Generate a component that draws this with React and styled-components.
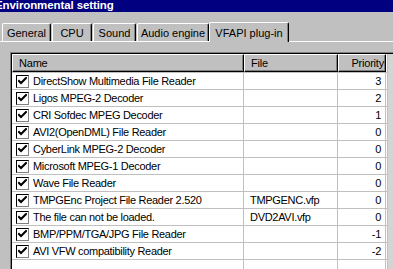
import React from "react";
import styled, { createGlobalStyle } from "styled-components";

const Global = createGlobalStyle`
  html, body { margin: 0; padding: 0; background: #c0c0c0; overflow: hidden; }
  * { box-sizing: border-box; }
`;

const FONT = `"Liberation Sans", Arial, sans-serif`;

const Window = styled.div`
  width: 393px;
  height: 269px;
  overflow: hidden;
  background: #c0c0c0;
  font-family: ${FONT};
  font-size: 11px;
  color: #000;
`;

const TitleBar = styled.div`
  height: 12px;
  background: #000080;
  color: #fff;
  font-weight: bold;
  font-size: 11.5px;
  line-height: 10px;
  white-space: nowrap;
  overflow: hidden;
`;

const TitleText = styled.span`
  display: inline-block;
  margin-left: -5px;
  letter-spacing: -0.1px;
`;

const TabStrip = styled.div`
  display: flex;
  align-items: flex-end;
  height: 20px;
  margin-top: 9px;
  padding-left: 2px;
`;

const Tab = styled.div`
  position: relative;
  width: ${(p) => p.$w}px;
  height: ${(p) => (p.$active ? 20 : 18)}px;
  padding-top: ${(p) => (p.$active ? 4 : 3)}px;
  margin: ${(p) => (p.$active ? "0 0 -1px -1px" : "0 1px 0 0")};
  border-top: 1px solid #fff;
  border-left: 1px solid #fff;
  border-right: 1px solid #000;
  box-shadow: inset -1px 0 0 #808080;
  border-radius: 2px 2px 0 0;
  background: #c0c0c0;
  white-space: nowrap;
  text-align: center;
  line-height: 13px;
  z-index: ${(p) => (p.$active ? 1 : 0)};
`;

const Panel = styled.div`
  border-top: 1px solid #fff;
  padding: 10px 0 0 10px;
`;

const ListBox = styled.div`
  display: flex;
  border-top: 1px solid #808080;
  border-left: 1px solid #808080;
  box-shadow: inset 1px 1px 0 #000;
  padding: 1px 0 0 1px;
  width: 400px;
  height: 240px;
  background: #fff;
`;

const Table = styled.div`
  width: 375px;
  flex: none;
  display: flex;
  flex-direction: column;
`;

const COLS = "232px 94px 48px";

const HeaderRow = styled.div`
  display: grid;
  grid-template-columns: ${COLS};
  height: 18px;
`;

const HeaderCell = styled.div`
  background: #c0c0c0;
  border-top: 1px solid #fff;
  border-left: 1px solid #fff;
  border-right: 1px solid #000;
  border-bottom: 1px solid #000;
  box-shadow: inset -1px -1px 0 #808080;
  padding: 1px ${(p) => (p.$right ? "1px" : "6px")} 0 6px;
  text-align: ${(p) => (p.$right ? "right" : "left")};
  line-height: 14px;
  white-space: nowrap;
  letter-spacing: -0.2px;
`;

const Row = styled.div`
  display: grid;
  grid-template-columns: ${COLS};
  height: 17px;
  border-top: 1px solid #c0c0c0;
`;

const Cell = styled.div`
  display: flex;
  align-items: center;
  justify-content: ${(p) => (p.$right ? "flex-end" : "flex-start")};
  padding: 0 ${(p) => (p.$right ? "4px" : "6px")} 0 ${(p) => (p.$first ? "4px" : "6px")};
  border-right: 1px solid #c0c0c0;
  white-space: nowrap;
  overflow: hidden;
  line-height: 16px;
  letter-spacing: -0.3px;
`;

const Check = styled.span`
  flex: none;
  width: 13px;
  height: 13px;
  border: 1px solid #000;
  border-right-color: #808080;
  border-bottom-color: #808080;
  background: #fff;
  margin-right: 4px;
  display: flex;
  align-items: center;
  justify-content: center;
`;

const Scroll = styled.div`
  flex: none;
  width: 20px;
  background: #d4d4d4;
  border-left: 1px solid #c0c0c0;
`;

const tabs = [
  ["General", 49],
  ["CPU", 40],
  ["Sound", 43],
  ["Audio engine", 72],
];

const rows = [
  ["DirectShow Multimedia File Reader", "", "3"],
  ["Ligos MPEG-2 Decoder", "", "2"],
  ["CRI Sofdec MPEG Decoder", "", "1"],
  ["AVI2(OpenDML) File Reader", "", "0"],
  ["CyberLink MPEG-2 Decoder", "", "0"],
  ["Microsoft MPEG-1 Decoder", "", "0"],
  ["Wave File Reader", "", "0"],
  ["TMPGEnc Project File Reader 2.520", "TMPGENC.vfp", "0"],
  ["The file can not be loaded.", "DVD2AVI.vfp", "0"],
  ["BMP/PPM/TGA/JPG File Reader", "", "-1"],
  ["AVI VFW compatibility Reader", "", "-2"],
  ["", "", ""],
];

const CheckMark = () => (
  <svg width="9" height="9" viewBox="0 0 9 9">
    <path d="M1 4 L3 6 L8 1" fill="none" stroke="#000" strokeWidth="2" strokeLinecap="square" />
  </svg>
);

export default function App() {
  return (
    <Window>
      <Global />
      <TitleBar>
        <TitleText>Environmental setting</TitleText>
      </TitleBar>
      <TabStrip>
        {tabs.map(([t, w]) => (
          <Tab key={t} $w={w}>
            {t}
          </Tab>
        ))}
        <Tab $active $w={80}>
          VFAPI plug-in
        </Tab>
      </TabStrip>
      <Panel>
        <ListBox>
          <Table>
            <HeaderRow>
              <HeaderCell>Name</HeaderCell>
              <HeaderCell>File</HeaderCell>
              <HeaderCell $right>Priority</HeaderCell>
            </HeaderRow>
            {rows.map(([name, file, pri], i) => (
              <Row key={i}>
                <Cell $first>
                  {name && (
                    <Check>
                      <CheckMark />
                    </Check>
                  )}
                  {name}
                </Cell>
                <Cell>{file}</Cell>
                <Cell $right>{pri}</Cell>
              </Row>
            ))}
          </Table>
          <Scroll />
        </ListBox>
      </Panel>
    </Window>
  );
}
